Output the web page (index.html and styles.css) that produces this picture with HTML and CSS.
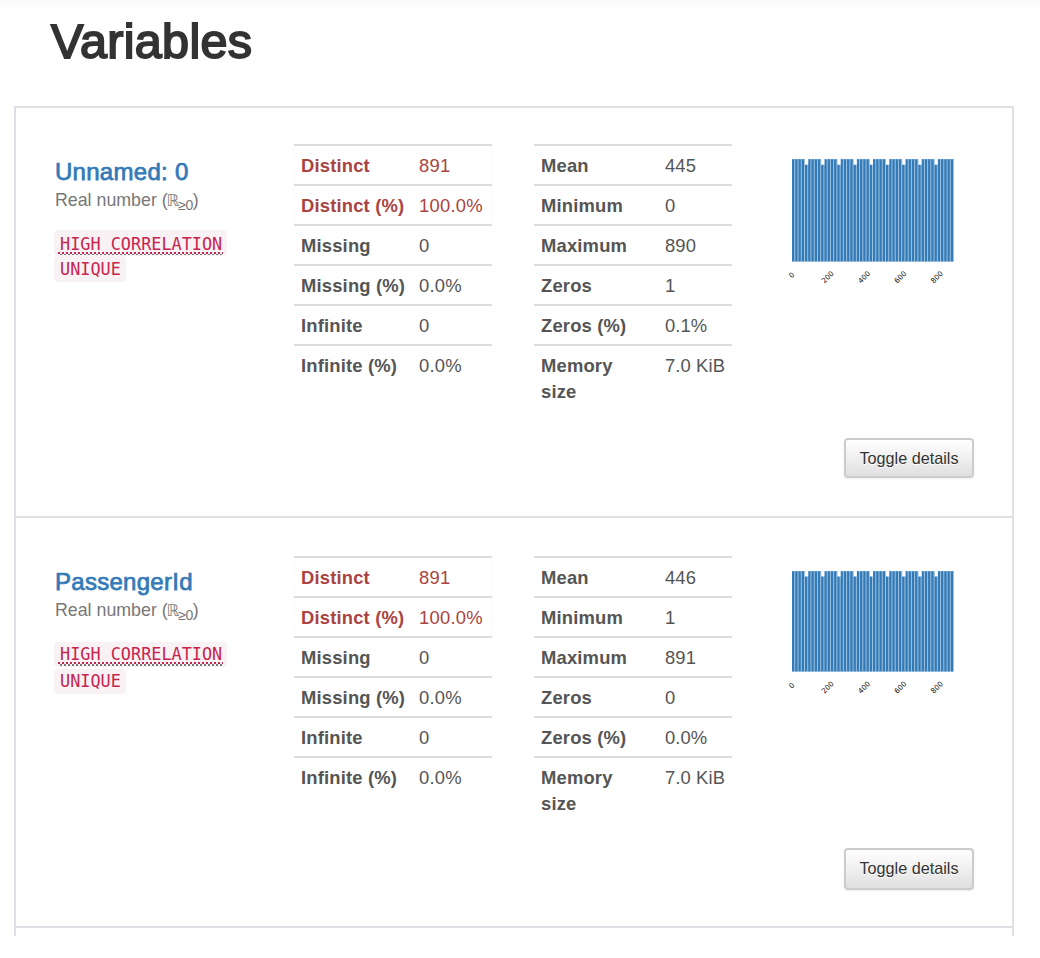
FILE: index.html
```
<!DOCTYPE html>
<html lang="en">
<head>
<meta charset="utf-8">
<title>Variables</title>
<link rel="stylesheet" href="styles.css">
</head>
<body>
<main class="page">
<h1 class="title">Variables</h1>
<div class="sections">
<section class="variable">
  <div class="summary">
    <h3 class="name"><a>Unnamed: 0</a></h3>
    <p class="kind">Real number (<span class="set">ℝ</span><sub>≥0</sub>)</p>
    <div class="tags"><code><abbr>HIGH CORRELATION</abbr></code><code>UNIQUE</code></div>
  </div>
  <table class="stats">
    <tr class="alert"><th>Distinct</th><td>891</td></tr>
    <tr class="alert"><th>Distinct (%)</th><td>100.0%</td></tr>
    <tr><th>Missing</th><td>0</td></tr>
    <tr><th>Missing (%)</th><td>0.0%</td></tr>
    <tr><th>Infinite</th><td>0</td></tr>
    <tr><th>Infinite (%)</th><td>0.0%</td></tr>
  </table>
  <table class="stats wide">
    <tr><th>Mean</th><td>445</td></tr>
    <tr><th>Minimum</th><td>0</td></tr>
    <tr><th>Maximum</th><td>890</td></tr>
    <tr><th>Zeros</th><td>1</td></tr>
    <tr><th>Zeros (%)</th><td>0.1%</td></tr>
    <tr><th>Memory size</th><td>7.0 KiB</td></tr>
  </table>
  <svg class="chart" width="180" height="140" viewBox="0 0 180 140">
    <rect class="gaps" x="10" y="15" width="162" height="103"/>
    <path class="bars" d="M10 66.2H172" stroke-width="102"/>
    <path class="dips" d="M22.96 17.8H160" stroke-width="6"/>
    <g class="ticks">
      <text transform="translate(9.8 134.5) rotate(-45)">0</text>
      <text transform="translate(42.5 139.7) rotate(-45)">200</text>
      <text transform="translate(79 139.7) rotate(-45)">400</text>
      <text transform="translate(115.3 139.7) rotate(-45)">600</text>
      <text transform="translate(151.8 139.7) rotate(-45)">800</text>
    </g>
  </svg>
  <button class="toggle">Toggle details</button>
</section>
<section class="variable second">
  <div class="summary">
    <h3 class="name"><a>PassengerId</a></h3>
    <p class="kind">Real number (<span class="set">ℝ</span><sub>≥0</sub>)</p>
    <div class="tags"><code><abbr>HIGH CORRELATION</abbr></code><code>UNIQUE</code></div>
  </div>
  <table class="stats">
    <tr class="alert"><th>Distinct</th><td>891</td></tr>
    <tr class="alert"><th>Distinct (%)</th><td>100.0%</td></tr>
    <tr><th>Missing</th><td>0</td></tr>
    <tr><th>Missing (%)</th><td>0.0%</td></tr>
    <tr><th>Infinite</th><td>0</td></tr>
    <tr><th>Infinite (%)</th><td>0.0%</td></tr>
  </table>
  <table class="stats wide">
    <tr><th>Mean</th><td>446</td></tr>
    <tr><th>Minimum</th><td>1</td></tr>
    <tr><th>Maximum</th><td>891</td></tr>
    <tr><th>Zeros</th><td>0</td></tr>
    <tr><th>Zeros (%)</th><td>0.0%</td></tr>
    <tr><th>Memory size</th><td>7.0 KiB</td></tr>
  </table>
  <svg class="chart" width="180" height="140" viewBox="0 0 180 140">
    <rect class="gaps" x="10" y="15" width="162" height="101"/>
    <path class="bars" d="M10 65.2H172" stroke-width="100"/>
    <path class="dips" d="M22.96 17.5H160" stroke-width="6"/>
    <g class="ticks">
      <text transform="translate(9.8 133) rotate(-45)">0</text>
      <text transform="translate(42.5 138) rotate(-45)">200</text>
      <text transform="translate(79 138) rotate(-45)">400</text>
      <text transform="translate(115.3 138) rotate(-45)">600</text>
      <text transform="translate(151.8 138) rotate(-45)">800</text>
    </g>
  </svg>
  <button class="toggle">Toggle details</button>
</section>
<div class="next"></div>
</div>
</main>
</body>
</html>
```

FILE: styles.css
```
* { box-sizing: border-box; }
body {
  margin: 0;
  height: 958px;
  background: linear-gradient(#fafafa, #fff 12px) #fff;
  font-family: "Liberation Sans", Arial, sans-serif;
  color: #555;
  overflow: hidden;
}
.page { padding: 14px 26px 0 14px; }
.title {
  margin: 0 0 38px;
  padding-left: 37px;
  font-size: 48.5px;
  line-height: 54px;
  font-weight: 400;
  letter-spacing: .3px;
  color: #333;
  -webkit-text-stroke: 1.9px #333;
}
.sections { border: 2px solid #dfdfe5; border-bottom: 0; }
.variable {
  display: grid;
  grid-template-columns: 239px 198px 198px 180px;
  grid-template-rows: 294px auto;
  align-items: start;
  height: 410px;
  padding: 36px 38px 0 39px;
  border-bottom: 2px solid #dfdfe5;
}
.second { padding-top: 38px; grid-template-rows: 292px auto; }
.summary { padding-top: 14px; }
.second .summary { padding-top: 12px; }
.name {
  margin: 0;
  font-size: 24px;
  line-height: 27px;
  font-weight: 400;
  letter-spacing: .28px;
  color: #337ab7;
  -webkit-text-stroke: .75px #337ab7;
}
.kind {
  margin: 0;
  height: 45px;
  font-size: 17.8px;
  line-height: 30px;
  color: #777;
  white-space: nowrap;
}
.second .kind { height: 47px; }
.kind sub { margin-left: -1px; font-size: 14px; line-height: 0; letter-spacing: -.5px; vertical-align: baseline; position: relative; top: 4px; }
.set { margin-left: -1px; font-family: "DejaVu Sans", sans-serif; font-size: 16px; line-height: 1; }
.tags { display: flex; flex-direction: column; align-items: flex-start; margin-left: -1px; }
.tags code {
  height: 26px;
  padding: 0 5px 0 6px;
  border-radius: 4px;
  background: #f9f2f4;
  color: #c7254e;
  font: 16.85px/28px "DejaVu Sans Mono", monospace;
}
.tags code + code { line-height: 26px; }
.second .tags code { height: 25px; margin-bottom: 2px; line-height: 25px; }
.tags abbr {
  display: block;
  height: 25px;
  margin: 0 -1px 0 -2px;
  padding: 0 1px 0 2px;
  background: repeating-linear-gradient(90deg, #c7254e 0 2px, transparent 2px 4px) 0 22px / 100% 2px no-repeat,
    repeating-linear-gradient(90deg, transparent 0 2px, #777 2px 4px) 0 24px / 100% 2px no-repeat;
}
.second .tags abbr { background-position: 0 20px, 0 22px; }
.stats {
  width: 198px;
  border-collapse: separate;
  border-spacing: 0;
  table-layout: fixed;
  font-size: 18.4px;
  line-height: 26px;
}
.stats.wide { margin-left: 42px; }
.stats th, .stats td { padding: 7px 0 5px 7px; border-top: 2px solid #ddd; text-align: left; vertical-align: top; }
.stats th { width: 118px; font-weight: 700; letter-spacing: .18px; }
.stats.wide th { width: 124px; padding-right: 20px; }
.stats td { letter-spacing: .25px; white-space: nowrap; }
.stats.wide td { letter-spacing: .1px; }
.alert { color: #a94442; }
.alert td { box-shadow: inset -1px 0 #f8f8f8; }
.alert th { box-shadow: inset 1px 0 #fbfbfb; }
.chart { margin-left: 92px; overflow: visible; }
.gaps { fill: #a5c7e2; }
.bars { stroke: #337ab7; stroke-dasharray: 2.3 .94; }
.dips { stroke: #fff; stroke-dasharray: 3.24 12.96; }
.ticks text { font: 7.2px "DejaVu Sans", sans-serif; fill: #111; }
.toggle {
  grid-column: 1 / -1;
  justify-self: end;
  margin-right: -104px;
  width: 130px;
  height: 40px;
  padding: 0;
  border: 2px solid #ccc;
  border-radius: 4px;
  background: linear-gradient(#fff, #e0e0e0);
  box-shadow: 0 1px 2px rgba(0, 0, 0, .08);
  font: 16.2px "Liberation Sans", Arial, sans-serif;
  color: #333;
  text-shadow: 0 1px #fff;
}
.second .toggle { height: 42px; padding-bottom: 2px; }
.next { height: 8px; }
```
